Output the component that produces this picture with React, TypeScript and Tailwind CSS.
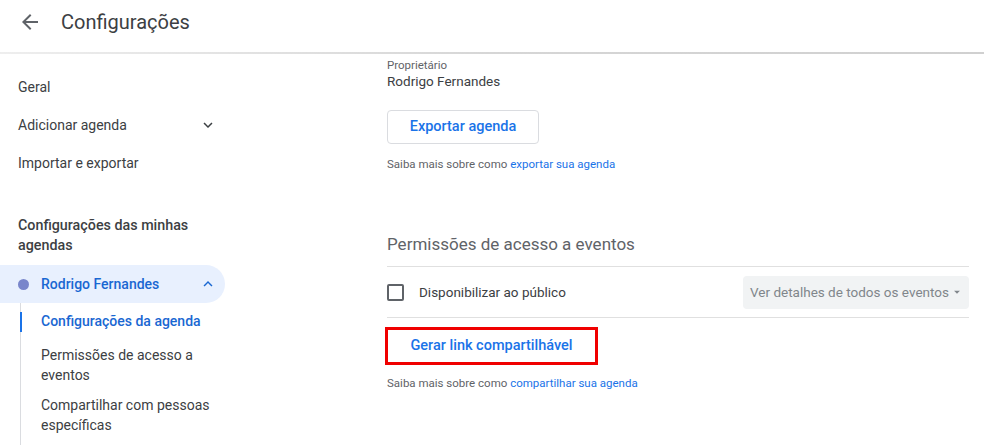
import React from 'react';

const font = { fontFamily: 'Roboto, "Liberation Sans", Arial, sans-serif' };

function BackArrow() {
  return (
    <svg width="24" height="24" viewBox="0 0 24 24" className="fill-[#5f6368]">
      <path d="M20 11H7.83l5.59-5.59L12 4l-8 8 8 8 1.41-1.41L7.83 13H20v-2z" />
    </svg>
  );
}

function Chevron({ up = false, className = '' }: { up?: boolean; className?: string }) {
  return (
    <svg width="18" height="18" viewBox="0 0 24 24" className={className}>
      {up ? (
        <path d="M7.41 15.41L12 10.83l4.59 4.58L18 14l-6-6-6 6z" />
      ) : (
        <path d="M16.59 8.59L12 13.17 7.41 8.59 6 10l6 6 6-6z" />
      )}
    </svg>
  );
}

function SideItem({ label, chevron }: { label: string; chevron?: boolean }) {
  return (
    <div className="h-[38px] flex items-center justify-between pl-[18px] pr-[39px] text-[14px] text-[#3c4043]">
      <span>{label}</span>
      {chevron && <Chevron className="fill-[#3c4043]" />}
    </div>
  );
}

function Sidebar() {
  return (
    <aside className="w-[256px] shrink-0 flex flex-col">
      <div className="h-[14px]" />
      <SideItem label="Geral" />
      <SideItem label="Adicionar agenda" chevron />
      <SideItem label="Importar e exportar" />

      <div className="mt-[33px] pl-[18px] pr-[40px] text-[14.3px] leading-[20px] text-[#3c4043] font-medium">
        Configurações das minhas agendas
      </div>

      {/* agenda ativa */}
      <div className="mt-[10px] w-[225px] h-[38px] rounded-r-full bg-[#e8f0fe] flex items-center pl-[18px] pr-[8px]">
        <span className="w-[11px] h-[11px] rounded-full bg-[#7986cb]" />
        <span className="ml-[12px] flex-1 text-[14px] font-medium text-[#1967d2]">Rodrigo Fernandes</span>
        <Chevron up className="fill-[#1967d2]" />
      </div>

      <div className="relative ml-[20px] flex-1 border-l border-[#dadce0] pl-[20px] text-[14px] leading-[20px] text-[#3c4043]">
        <span className="absolute left-[-1px] top-[9px] h-[20px] w-[2px] bg-[#1a73e8]" />
        <div className="mt-[8px] text-[#1967d2] font-medium">Configurações da agenda</div>
        <div className="mt-[14px] pr-[20px]">Permissões de acesso a eventos</div>
        <div className="mt-[10px] pr-[20px]">Compartilhar com pessoas específicas</div>
      </div>
    </aside>
  );
}

function Main() {
  return (
    <main className="flex-1 pl-[131px] pr-[15px] flex flex-col text-[#3c4043]">
      <div className="mt-[4px] text-[11.5px] leading-[14px] text-[#5f6368]">Proprietário</div>
      <div className="text-[13.5px] leading-[18px]">Rodrigo Fernandes</div>

      <button className="mt-[20px] w-[152px] h-[34px] rounded border border-[#dadce0] bg-white text-[14.5px] font-medium text-[#1a73e8]">
        Exportar agenda
      </button>

      <div className="mt-[12px] text-[11.5px] leading-[16px] text-[#5f6368]">
        Saiba mais sobre como <span className="text-[#1a73e8]">exportar sua agenda</span>
      </div>

      <div className="mt-[60px] text-[17px] leading-[24px] text-[#5f6368]">Permissões de acesso a eventos</div>

      <div className="mt-[10px] border-t border-[#e0e0e0]" />
      <div className="h-[50px] flex items-center">
        <span className="w-[17px] h-[17px] rounded-[2px] border-2 border-[#5f6368]" />
        <span className="ml-[15px] flex-1 text-[13.5px]">Disponibilizar ao público</span>
        <div className="w-[226px] h-[33px] rounded bg-[#f1f3f4] flex items-center justify-between pl-[7px] pr-[5px] text-[13.5px] text-[#80868b] whitespace-nowrap">
          <span>Ver detalhes de todos os eventos</span>
          <svg width="14" height="14" viewBox="0 0 24 24" className="fill-[#80868b]">
            <path d="M7 10l5 5 5-5z" />
          </svg>
        </div>
      </div>
      <div className="border-t border-[#e0e0e0]" />

      <button className="mt-[9px] -ml-[2px] w-[213px] h-[38px] border-[3px] border-[#f00000] bg-white text-[14.5px] font-medium text-[#1a73e8]">
        Gerar link compartilhável
      </button>

      <div className="mt-[10px] text-[11.5px] leading-[16px] text-[#5f6368]">
        Saiba mais sobre como <span className="text-[#1a73e8]">compartilhar sua agenda</span>
      </div>
    </main>
  );
}

export default function App() {
  return (
    <div className="w-[984px] h-[445px] overflow-hidden bg-white flex flex-col" style={font}>
      <header className="h-[52px] shrink-0 flex items-center pl-[18px] pb-[8px]">
        <BackArrow />
        <h1 className="ml-[19px] text-[20px] text-[#3c4043]">Configurações</h1>
      </header>
      <div className="h-[2px] shrink-0 bg-gradient-to-r from-[#eeeeee] via-[#d6d6d6] to-[#d0d0d0]" />
      <div className="flex flex-1 min-h-0">
        <Sidebar />
        <Main />
      </div>
    </div>
  );
}
